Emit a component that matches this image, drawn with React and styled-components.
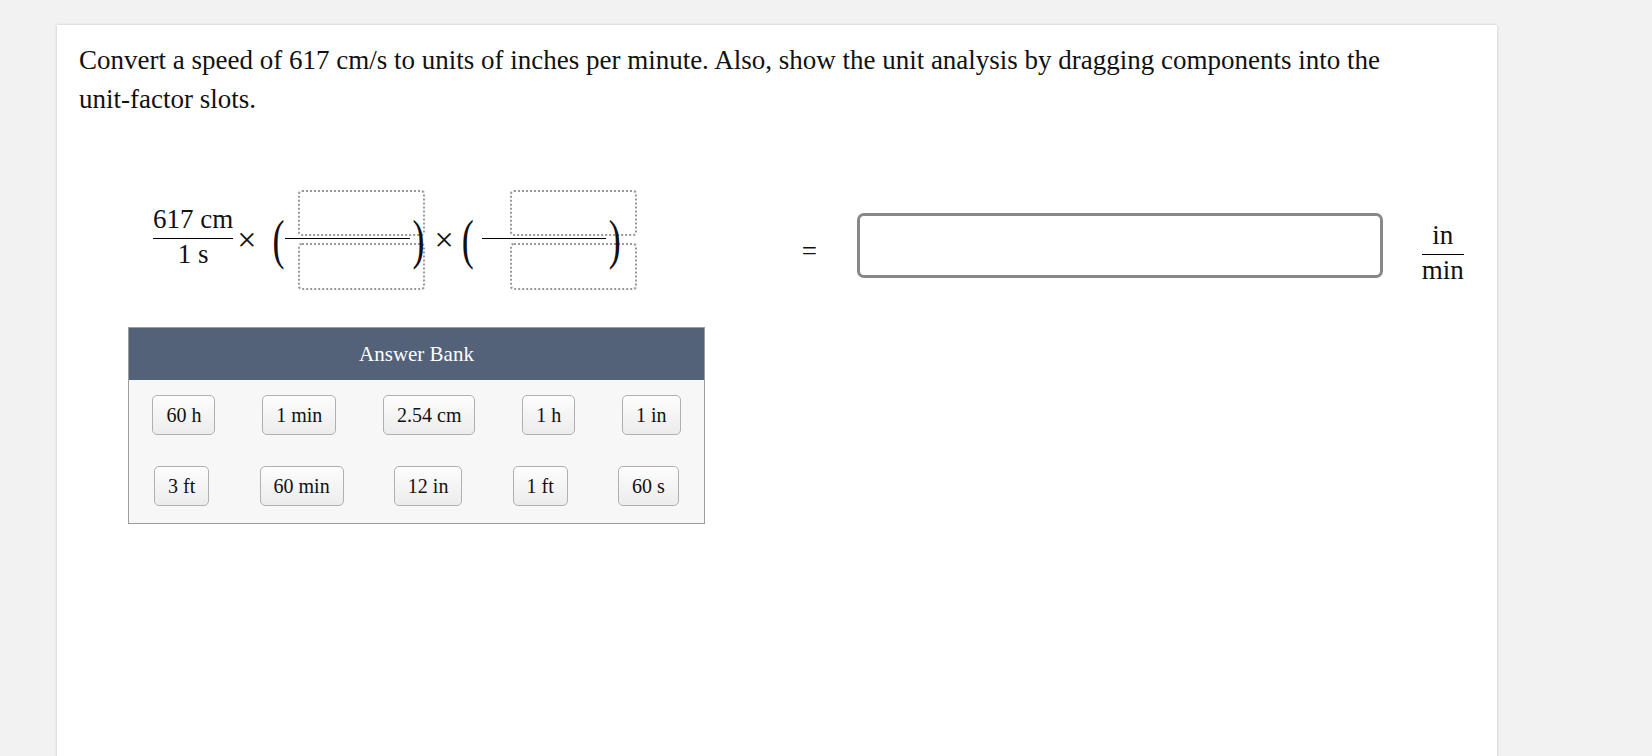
import styled, { createGlobalStyle } from "styled-components";

const GlobalStyle = createGlobalStyle`
  body {
    margin: 0;
    background: #f2f2f2;
    font-family: "Liberation Serif", "Times New Roman", serif;
    color: #111;
  }
`;

const Page = styled.div`
  padding: 25px 0 0 57px;
  height: 731px;
  overflow: hidden;
`;

const Card = styled.div`
  width: 1396px;
  min-height: 760px;
  background: #fff;
  padding: 16px 22px 0;
  box-shadow: 0 0 3px rgba(0, 0, 0, 0.18);
`;

const Prompt = styled.p`
  margin: 0;
  max-width: 1340px;
  font-size: 27px;
  line-height: 39px;
`;

const MathRow = styled.div`
  display: flex;
  align-items: center;
  margin-top: 71px;
  font-size: 27px;
`;

const Fraction = styled.div`
  display: flex;
  flex-direction: column;
  align-items: center;
  margin: ${(p) => p.$margin || "0"};
`;

const Num = styled.span`
  line-height: 30px;
  padding-bottom: 4px;
  white-space: nowrap;
`;

const Den = styled.span`
  line-height: 30px;
  white-space: nowrap;
`;

const Bar = styled.div`
  align-self: stretch;
  height: 1px;
  background: #000;
`;

const Times = styled.span`
  font-size: 34px;
  line-height: 1;
  margin: ${(p) => p.$margin};
`;

const Factor = styled.div`
  display: flex;
  align-items: center;
`;

const Paren = styled.span`
  display: inline-block;
  font-size: 36px;
  line-height: 1;
  transform: scaleY(1.5);
  position: relative;
  z-index: 1;
  margin: ${(p) => p.$margin || "0"};
`;

const SlotStack = styled.div`
  display: flex;
  flex-direction: column;
  width: 127px;
`;

const Slot = styled.div`
  width: 127px;
  height: ${(p) => p.$h}px;
  box-sizing: border-box;
  margin-left: ${(p) => p.$shift}px;
  border: 2px dotted #9a9a9a;
  border-radius: 4px;
`;

const SlotBar = styled.div`
  width: ${(p) => p.$w}px;
  height: 1px;
  background: #000;
  margin: 2px 0 4px;
`;

const Equals = styled.span`
  line-height: 1;
  margin: 23px 0 0 181px;
`;

const AnswerBox = styled.div`
  width: 526px;
  height: 65px;
  box-sizing: border-box;
  margin: 10px 0 0 40px;
  border: 3px solid #888;
  border-radius: 7px;
  background: #fff;
`;

const Bank = styled.div`
  width: 575px;
  margin: 37px 0 0 49px;
  border: 1px solid #9c9c9c;
  background: #f7f7f7;
`;

const BankHeader = styled.div`
  height: 52px;
  background: #536179;
  color: #fff;
  font-size: 21px;
  display: flex;
  align-items: center;
  justify-content: center;
`;

const BankBody = styled.div`
  display: flex;
  flex-direction: column;
  gap: 31px;
  padding: 15px 0 17px;
`;

const ChipRow = styled.div`
  display: flex;
  justify-content: space-around;
`;

const Chip = styled.div`
  height: 40px;
  box-sizing: border-box;
  padding: 0 13px;
  display: flex;
  align-items: center;
  font-size: 20px;
  border: 1px solid #b0b0b0;
  border-radius: 5px;
  background: linear-gradient(#fdfdfd, #ececec);
  white-space: nowrap;
`;

const rows = [
  ["60 h", "1 min", "2.54 cm", "1 h", "1 in"],
  ["3 ft", "60 min", "12 in", "1 ft", "60 s"],
];

const UnitFactor = ({ open, shift, bar }) => (
  <Factor>
    <Paren $margin={open}>(</Paren>
    <SlotStack>
      <Slot $h={46} $shift={shift} />
      <SlotBar $w={bar} />
      <Slot $h={47} $shift={shift} />
    </SlotStack>
    <Paren>)</Paren>
  </Factor>
);

export default function App() {
  return (
    <>
      <GlobalStyle />
      <Page>
        <Card>
          <Prompt>
            Convert a speed of 617 cm/s to units of inches per minute. Also, show the unit analysis
            by dragging components into the unit-factor slots.
          </Prompt>

          <MathRow>
            <Fraction $margin="0 0 8px 74px">
              <Num>617 cm</Num>
              <Bar />
              <Den>1 s</Den>
            </Fraction>
            <Times $margin="0 16px 0 4px">×</Times>
            <UnitFactor open="0 1px 0 0" shift={13} bar={125} />
            <Times $margin="0 8px 0 10px">×</Times>
            <UnitFactor open="0 8px 0 0" shift={28} bar={124} />
            <Equals>=</Equals>
            <AnswerBox />
            <Fraction $margin="24px 0 0 39px">
              <Num>in</Num>
              <Bar />
              <Den>min</Den>
            </Fraction>
          </MathRow>

          <Bank>
            <BankHeader>Answer Bank</BankHeader>
            <BankBody>
              {rows.map((row, i) => (
                <ChipRow key={i}>
                  {row.map((label) => (
                    <Chip key={label}>{label}</Chip>
                  ))}
                </ChipRow>
              ))}
            </BankBody>
          </Bank>
        </Card>
      </Page>
    </>
  );
}
